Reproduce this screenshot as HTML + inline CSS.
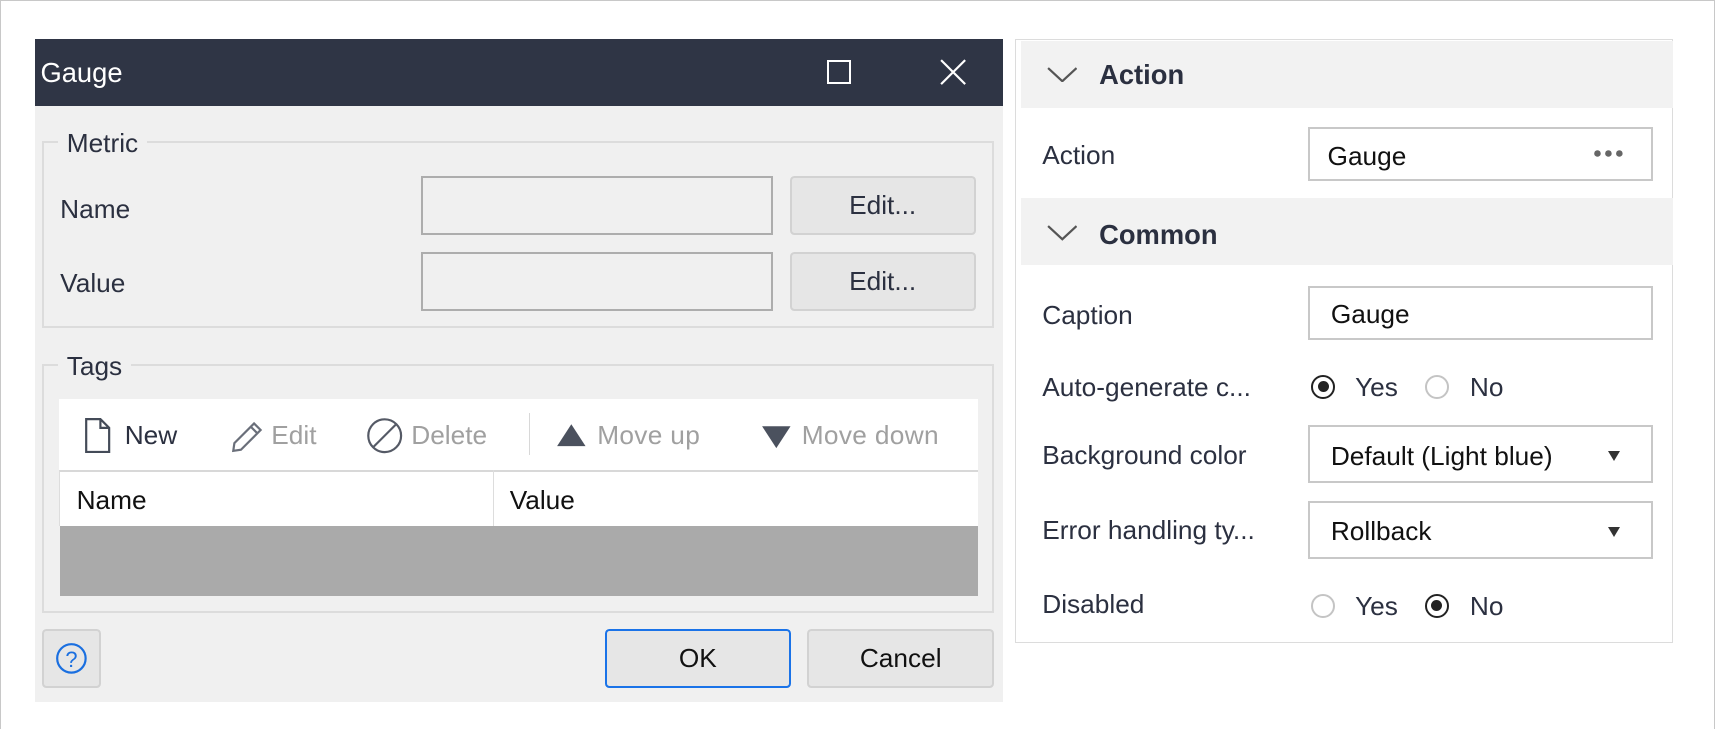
<!DOCTYPE html>
<html><head><meta charset="utf-8"><style>
*{box-sizing:border-box;margin:0;padding:0}
html,body{width:1715px;height:729px;overflow:hidden;background:#fff}
#w{zoom:1.09375;width:1568px;height:667px;position:relative;font-family:"Liberation Sans",sans-serif;font-size:24px;color:#2b3040}
#bd{position:absolute;left:0;top:0;width:1568px;height:667px;border:1px solid #c8c8c8}
.a{position:absolute}
.dlg{left:32px;top:36px;width:885px;height:606px;background:#f0f0f0}
.tb{left:0;top:0;width:885px;height:61px;background:#2f3545;color:#fff}
.gb{border:2px solid #dcdcdc}
.lg{background:#f0f0f0;padding:0 8px}
.inp{border:2px solid #adadad;background:#f0f0f0}
.btn{border:2px solid #d2d2d2;background:#e6e6e6;border-radius:4px;text-align:center}
.t{white-space:nowrap}
.pn{left:928px;top:36px;width:602px;height:552px;border:1px solid #dcdcdc;background:#fff}
.sh{left:5px;width:596px;height:61px;background:#f2f2f2;font-weight:bold}
.pi{border:2px solid #c8c8c8;background:#fff;height:50px;width:315px;left:267px}
.rd{width:22px;height:22px;border-radius:50%;border:2px solid #c4c4c4;background:#fff}
.rd.on{border-color:#222}
.rd.on::after{content:"";position:absolute;left:4px;top:4px;width:10px;height:10px;border-radius:50%;background:#222}
</style></head><body><div id="w"><div id="bd"></div>
<div class="a dlg">
 <div class="a tb"><div class="a t" style="left:5px;top:16px;font-size:25px">Gauge</div>
  <div class="a" style="left:724px;top:19px;width:22px;height:22px;border:2px solid #fff"></div>
  <svg class="a" style="left:827px;top:18px" width="24" height="24"><path d="M1 1L23 23M23 1L1 23" stroke="#fff" stroke-width="2"/></svg></div>
 <div class="a gb" style="left:6px;top:93px;width:871px;height:171px"></div>
 <div class="a lg t" style="left:21px;top:81px">Metric</div>
 <div class="a t" style="left:23px;top:141px">Name</div>
 <div class="a inp" style="left:353px;top:125px;width:322px;height:54px"></div>
 <div class="a btn t" style="left:690px;top:125px;width:170px;height:54px;line-height:50px">Edit...</div>
 <div class="a t" style="left:23px;top:209px">Value</div>
 <div class="a inp" style="left:353px;top:194px;width:322px;height:54px"></div>
 <div class="a btn t" style="left:690px;top:194px;width:170px;height:54px;line-height:50px">Edit...</div>
 <div class="a gb" style="left:6px;top:297px;width:871px;height:227px"></div>
 <div class="a lg t" style="left:21px;top:285px">Tags</div>
 <div class="a" style="left:22px;top:329px;width:840px;height:65px;background:#fff"></div>
 <svg class="a" style="left:45px;top:346px" width="26" height="32"><path d="M2 1H15L23 9V31H2Z M15 1V9H23" fill="none" stroke="#444b58" stroke-width="2"/></svg>
 <div class="a t" style="left:82px;top:348px">New</div>
 <svg class="a" style="left:178px;top:346px" width="32" height="32"><path d="M3 30L4 23L22 5L28 11L10 29Z M19 8L25 14" fill="none" stroke="#6a6f7a" stroke-width="2"/></svg>
 <div class="a t" style="left:216px;top:348px;color:#a0a0a0">Edit</div>
 <svg class="a" style="left:302px;top:344px" width="36" height="36"><circle cx="18" cy="18" r="15" fill="none" stroke="#555a66" stroke-width="2"/><path d="M8 28L28 8" stroke="#555a66" stroke-width="2"/></svg>
 <div class="a t" style="left:344px;top:348px;color:#a0a0a0">Delete</div>
 <div class="a" style="left:452px;top:342px;width:1px;height:38px;background:#d8d8d8"></div>
 <svg class="a" style="left:476px;top:350px" width="28" height="24"><path d="M14 2L27 22H1Z" fill="#4b515e"/></svg>
 <div class="a t" style="left:514px;top:348px;color:#a0a0a0;letter-spacing:0.3px">Move up</div>
 <svg class="a" style="left:664px;top:352px" width="28" height="24"><path d="M1 2H27L14 22Z" fill="#4b515e"/></svg>
 <div class="a t" style="left:701px;top:348px;color:#a0a0a0;letter-spacing:0.3px">Move down</div>
 <div class="a" style="left:22px;top:394px;width:840px;height:51px;background:#fff;border-top:2px solid #d8d8d8;border-left:1px solid #ddd"></div>
 <div class="a" style="left:419px;top:394px;width:1px;height:51px;background:#ddd"></div>
 <div class="a t" style="left:38px;top:407px;color:#111">Name</div>
 <div class="a t" style="left:434px;top:407px;color:#111">Value</div>
 <div class="a" style="left:23px;top:445px;width:839px;height:64px;background:#aaa"></div>
 <div class="a btn" style="left:6px;top:539px;width:54px;height:54px"></div>
 <svg class="a" style="left:18px;top:551px" width="30" height="30"><circle cx="15" cy="15" r="13" fill="none" stroke="#1a6fe0" stroke-width="2"/><text x="15" y="23" font-size="20" text-anchor="middle" fill="#1a6fe0" font-family="Liberation Sans">?</text></svg>
 <div class="a btn t" style="left:521px;top:539px;width:170px;height:54px;line-height:50px;border-color:#1a73e8;color:#111">OK</div>
 <div class="a btn t" style="left:706px;top:539px;width:171px;height:54px;line-height:50px;color:#111">Cancel</div>
</div>
<div class="a pn">
 <div class="a sh" style="top:1px"><svg class="a" style="left:23px;top:23px" width="28" height="14"><path d="M1 1L14 13L27 1" fill="none" stroke="#555" stroke-width="2"/></svg><div class="a t" style="left:71px;top:16px;font-size:25px">Action</div></div>
 <div class="a t" style="left:24px;top:91px">Action</div>
 <div class="a pi" style="top:79px"><div class="a t" style="left:16px;top:11px;color:#111">Gauge</div>
  <svg class="a" style="left:258px;top:18px" width="34" height="10"><circle cx="5" cy="5" r="3" fill="#666"/><circle cx="15" cy="5" r="3" fill="#666"/><circle cx="25" cy="5" r="3" fill="#666"/></svg></div>
 <div class="a sh" style="top:144px"><svg class="a" style="left:23px;top:25px" width="28" height="14"><path d="M1 1L14 13L27 1" fill="none" stroke="#555" stroke-width="2"/></svg><div class="a t" style="left:71px;top:19px;font-size:25px">Common</div></div>
 <div class="a t" style="left:24px;top:237px">Caption</div>
 <div class="a pi" style="top:225px;height:49px"><div class="a t" style="left:19px;top:10px;color:#111">Gauge</div></div>
 <div class="a t" style="left:24px;top:303px">Auto-generate c...</div>
 <div class="a rd on" style="left:270px;top:306px"></div><div class="a t" style="left:310px;top:303px">Yes</div>
 <div class="a rd" style="left:374px;top:306px"></div><div class="a t" style="left:415px;top:303px">No</div>
 <div class="a t" style="left:24px;top:365px">Background color</div>
 <div class="a pi" style="top:352px;height:53px"><div class="a t" style="left:19px;top:12px;color:#111">Default (Light blue)</div><div class="a" style="left:272px;top:22px;border:6px solid transparent;border-top:10px solid #333"></div></div>
 <div class="a t" style="left:24px;top:434px">Error handling ty...</div>
 <div class="a pi" style="top:421px;height:53px"><div class="a t" style="left:19px;top:12px;color:#111">Rollback</div><div class="a" style="left:272px;top:22px;border:6px solid transparent;border-top:10px solid #333"></div></div>
 <div class="a t" style="left:24px;top:502px">Disabled</div>
 <div class="a rd" style="left:270px;top:506px"></div><div class="a t" style="left:310px;top:503px">Yes</div>
 <div class="a rd on" style="left:374px;top:506px"></div><div class="a t" style="left:415px;top:503px">No</div>
</div>
</div></body></html>
